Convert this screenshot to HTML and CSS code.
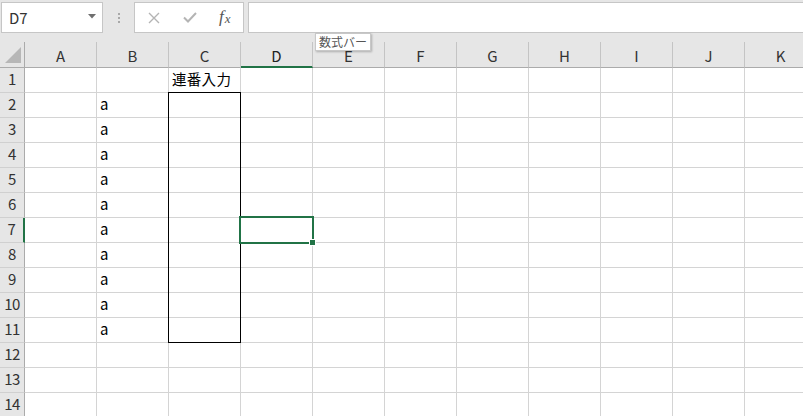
FILE: index.html
```html
<!DOCTYPE html>
<html lang="ja">
<head>
<meta charset="utf-8">
<link rel="stylesheet" href="styles.css">
</head>
<body>
<div class="app">
  <div class="topbar">
    <div class="namebox">
      <span class="name">D7</span>
      <svg class="caret" width="8" height="5" viewBox="0 0 8 5"><polygon points="0,0 8,0 4,4.5" fill="#6f6f6f"/></svg>
    </div>
    <div class="dots"><i></i><i></i><i></i></div>
    <div class="fbuttons">
      <svg class="ico" width="12" height="12" viewBox="0 0 12 12"><path d="M1 1 L11 11 M11 1 L1 11" stroke="#b4b4b4" stroke-width="1.4" fill="none"/></svg>
      <svg class="ico" width="14" height="11" viewBox="0 0 14 11"><path d="M1 5.5 L5 9.5 L13 1" stroke="#b4b4b4" stroke-width="2" fill="none"/></svg>
      <span class="fx">f<span class="fxx">x</span></span>
    </div>
    <div class="finput"></div>
    <div class="tooltip">数式バー</div>
  </div>
  <div class="sheet">
    <div class="grid">
      <div class="corner"><svg width="24" height="25" viewBox="0 0 24 25"><polygon points="21,5 21,21 5,21" fill="#b7b7b7"/></svg></div>
      <div class="ch">A</div><div class="ch">B</div><div class="ch">C</div><div class="ch sel">D</div><div class="ch">E</div><div class="ch">F</div><div class="ch">G</div><div class="ch">H</div><div class="ch">I</div><div class="ch">J</div><div class="ch">K</div>

      <div class="rh">1</div><div class="c"></div><div class="c"></div><div class="c cj">連番入力</div><div class="c"></div><div class="c"></div><div class="c"></div><div class="c"></div><div class="c"></div><div class="c"></div><div class="c"></div><div class="c"></div>
      <div class="rh">2</div><div class="c"></div><div class="c">a</div><div class="c"></div><div class="c"></div><div class="c"></div><div class="c"></div><div class="c"></div><div class="c"></div><div class="c"></div><div class="c"></div><div class="c"></div>
      <div class="rh">3</div><div class="c"></div><div class="c">a</div><div class="c"></div><div class="c"></div><div class="c"></div><div class="c"></div><div class="c"></div><div class="c"></div><div class="c"></div><div class="c"></div><div class="c"></div>
      <div class="rh">4</div><div class="c"></div><div class="c">a</div><div class="c"></div><div class="c"></div><div class="c"></div><div class="c"></div><div class="c"></div><div class="c"></div><div class="c"></div><div class="c"></div><div class="c"></div>
      <div class="rh">5</div><div class="c"></div><div class="c">a</div><div class="c"></div><div class="c"></div><div class="c"></div><div class="c"></div><div class="c"></div><div class="c"></div><div class="c"></div><div class="c"></div><div class="c"></div>
      <div class="rh">6</div><div class="c"></div><div class="c">a</div><div class="c"></div><div class="c"></div><div class="c"></div><div class="c"></div><div class="c"></div><div class="c"></div><div class="c"></div><div class="c"></div><div class="c"></div>
      <div class="rh sel">7</div><div class="c"></div><div class="c">a</div><div class="c"></div><div class="c"></div><div class="c"></div><div class="c"></div><div class="c"></div><div class="c"></div><div class="c"></div><div class="c"></div><div class="c"></div>
      <div class="rh">8</div><div class="c"></div><div class="c">a</div><div class="c"></div><div class="c"></div><div class="c"></div><div class="c"></div><div class="c"></div><div class="c"></div><div class="c"></div><div class="c"></div><div class="c"></div>
      <div class="rh">9</div><div class="c"></div><div class="c">a</div><div class="c"></div><div class="c"></div><div class="c"></div><div class="c"></div><div class="c"></div><div class="c"></div><div class="c"></div><div class="c"></div><div class="c"></div>
      <div class="rh">10</div><div class="c"></div><div class="c">a</div><div class="c"></div><div class="c"></div><div class="c"></div><div class="c"></div><div class="c"></div><div class="c"></div><div class="c"></div><div class="c"></div><div class="c"></div>
      <div class="rh">11</div><div class="c"></div><div class="c">a</div><div class="c"></div><div class="c"></div><div class="c"></div><div class="c"></div><div class="c"></div><div class="c"></div><div class="c"></div><div class="c"></div><div class="c"></div>
      <div class="rh">12</div><div class="c"></div><div class="c"></div><div class="c"></div><div class="c"></div><div class="c"></div><div class="c"></div><div class="c"></div><div class="c"></div><div class="c"></div><div class="c"></div><div class="c"></div>
      <div class="rh">13</div><div class="c"></div><div class="c"></div><div class="c"></div><div class="c"></div><div class="c"></div><div class="c"></div><div class="c"></div><div class="c"></div><div class="c"></div><div class="c"></div><div class="c"></div>
      <div class="rh">14</div><div class="c"></div><div class="c"></div><div class="c"></div><div class="c"></div><div class="c"></div><div class="c"></div><div class="c"></div><div class="c"></div><div class="c"></div><div class="c"></div><div class="c"></div>
    </div>
    <div class="range"></div>
    <div class="active"></div>
    <div class="handle"></div>
  </div>
</div>
</body>
</html>
```
FILE: styles.css
```css
html, body {
  margin: 0;
  padding: 0;
  width: 803px;
  height: 416px;
  overflow: hidden;
  background: #e6e6e6;
  font-family: "Noto Sans CJK JP", "Noto Sans", sans-serif;
}
.app {
  width: 803px;
  height: 416px;
  overflow: hidden;
}
.topbar {
  position: relative;
  height: 42px;
  display: flex;
  align-items: flex-start;
  padding-top: 2px;
  box-sizing: border-box;
}
.namebox {
  margin-left: 1px;
  width: 102px;
  height: 31px;
  box-sizing: border-box;
  background: #fff;
  border: 1px solid #c6c6c6;
  display: flex;
  align-items: center;
  justify-content: space-between;
  padding: 0 6px 0 7px;
}
.name {
  font-size: 15px;
  color: #333;
  line-height: 20px;
}
.caret { margin-top: -2px; }
.dots {
  width: 31px;
  height: 31px;
  display: flex;
  flex-direction: column;
  align-items: center;
  justify-content: center;
  gap: 2px;
}
.dots i {
  display: block;
  width: 2px;
  height: 2px;
  background: #a8a8a8;
}
.fbuttons {
  width: 110px;
  height: 31px;
  box-sizing: border-box;
  background: #fff;
  border: 1px solid #c6c6c6;
  display: flex;
  align-items: center;
  padding-left: 13px;
}
.fbuttons .ico:first-child { margin-right: 23px; }
.fbuttons .ico:nth-child(2) { margin-right: 22px; }
.fx {
  font-family: "Liberation Serif", "DejaVu Serif", serif;
  font-style: italic;
  font-size: 17px;
  color: #555;
  line-height: 17px;
  margin-top: -2px;
}
.fxx {
  font-size: 13px;
  position: relative;
  top: 1px;
  margin-left: 1px;
}
.finput {
  margin-left: 4px;
  flex: 1;
  height: 31px;
  box-sizing: border-box;
  background: #fff;
  border: 1px solid #c6c6c6;
  border-right: none;
}
.tooltip {
  position: absolute;
  left: 315px;
  top: 33px;
  height: 18px;
  box-sizing: border-box;
  padding: 0 3px;
  background: #fff;
  border: 1px solid #c8c8c8;
  box-shadow: 1px 1px 2px rgba(0,0,0,0.25);
  font-size: 12px;
  line-height: 16px;
  color: #555;
  z-index: 5;
}
.sheet {
  position: relative;
  height: 374px;
  overflow: hidden;
}
.grid {
  display: grid;
  grid-template-columns: 25px repeat(11, 72px);
  grid-template-rows: 26px repeat(14, 25px);
  width: 817px;
}
.grid > div {
  box-sizing: border-box;
}
.corner {
  background: #e6e6e6;
  border-right: 1px solid #ababab;
  border-bottom: 1px solid #ababab;
}
.corner svg { display: block; }
.ch {
  background: #e6e6e6;
  border-right: 1px solid #c4c4c4;
  border-bottom: 1px solid #ababab;
  text-align: center;
  font-size: 15px;
  line-height: 20px;
  padding-top: 4px;
  color: #333;
}
.ch.sel {
  border-bottom: 2px solid #217346;
  color: #222;
}
.rh {
  background: #e6e6e6;
  border-right: 1px solid #ababab;
  border-bottom: 1px solid #d0d0d0;
  text-align: center;
  font-size: 15px;
  line-height: 20px;
  padding-top: 1px;
  color: #333;
  letter-spacing: -0.5px;
}
.rh.sel {
  border-right: 2px solid #217346;
}
.c {
  background: #fff;
  border-right: 1px solid #d4d4d4;
  border-bottom: 1px solid #d4d4d4;
  font-size: 15px;
  line-height: 20px;
  padding: 1px 0 0 3px;
  color: #000;
  white-space: nowrap;
}
.c.cj {
  font-size: 14.5px;
  letter-spacing: 0.3px;
}
.range {
  position: absolute;
  left: 168px;
  top: 50px;
  width: 73px;
  height: 251px;
  box-sizing: border-box;
  border: 1px solid #000;
}
.active {
  position: absolute;
  left: 239px;
  top: 174px;
  width: 75px;
  height: 28px;
  box-sizing: border-box;
  border: 2px solid #217346;
}
.handle {
  position: absolute;
  left: 309px;
  top: 197px;
  width: 7px;
  height: 7px;
  box-sizing: border-box;
  background: #217346;
  border: 1px solid #fff;
}
```
